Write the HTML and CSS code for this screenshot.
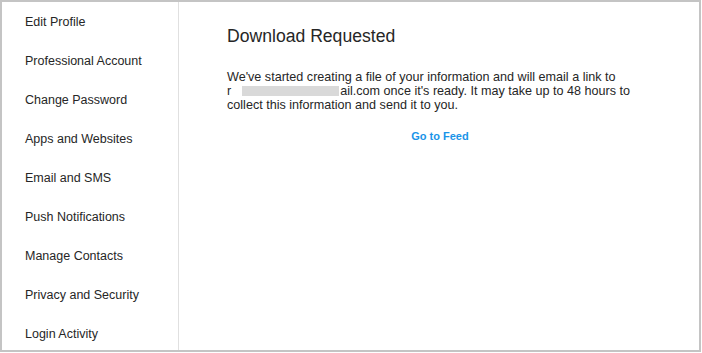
FILE: index.html
```html
<!DOCTYPE html>
<html lang="en">
<head>
  <meta charset="UTF-8">
  <title>Settings - Download Requested</title>
  <link rel="stylesheet" href="styles.css">
</head>
<body>

  <div class="frame">
    <!-- Left: settings menu -->
    <ul class="menu">
      <li>Edit Profile</li>
      <li>Professional Account</li>
      <li>Change Password</li>
      <li>Apps and Websites</li>
      <li>Email and SMS</li>
      <li>Push Notifications</li>
      <li>Manage Contacts</li>
      <li>Privacy and Security</li>
      <li>Login Activity</li>
    </ul>

    <!-- Right: content -->
    <div class="content">
      <h2>Download Requested</h2>
      <p class="message">
        We've started creating a file of your information and will email a link to<br>
        r<i class="blur"></i>ail.com once it's ready. It may take up to 48 hours to
        collect this information and send it to you.
      </p>
      <a class="feed-link" href="#">Go to Feed</a>
    </div>
  </div>

</body>
</html>
```

FILE: styles.css
```css
* {
  margin: 0;
  padding: 0;
  box-sizing: border-box;
}

body {
  font-family: "Liberation Sans", Arial, sans-serif;
  color: #262626;
  background-color: #fff;
  width: 702px;
  height: 353px;
  padding: 0 1px 1px 0;
}

.frame {
  display: flex;
  width: 701px;
  height: 352px;
  border: 2px solid #c4c4c4;
  background-color: #fff;
}

.menu {
  list-style: none;
  width: 177px;
  border-right: 1px solid #e0e0e0;
  padding-top: 13px;
}

.menu li {
  font-size: 12.5px;
  line-height: 15px;
  height: 39px;
  padding-left: 23px;
}

.content {
  flex: 1;
  display: flex;
  flex-direction: column;
  padding: 23px 60px 0 48px;
}

.content h2 {
  font-size: 17.6px;
  font-weight: normal;
  line-height: 22px;
  margin-bottom: 23px;
}

.message {
  font-size: 12.6px;
  line-height: 14px;
}

/* redacted part of the e-mail address */
.blur {
  display: inline-block;
  width: 97px;
  height: 10px;
  margin-left: 11px;
  margin-right: 1px;
  vertical-align: -1px;
  background-color: #d9d9d9;
}

.feed-link {
  align-self: center;
  margin-top: 18px;
  margin-left: 14px;
  font-size: 11px;
  font-weight: bold;
  color: #1a94e8;
  text-decoration: none;
}
```
